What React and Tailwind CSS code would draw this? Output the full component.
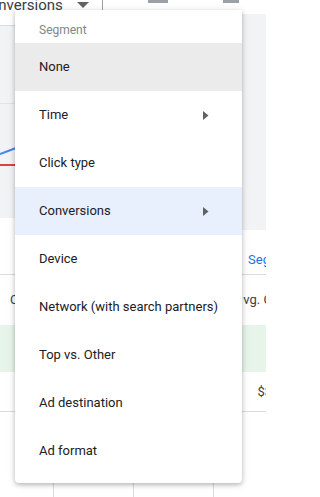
const items = [
  { label: "None", state: "hover" },
  { label: "Time", sub: true },
  { label: "Click type" },
  { label: "Conversions", sub: true, state: "active" },
  { label: "Device" },
  { label: "Network (with search partners)" },
  { label: "Top vs. Other" },
  { label: "Ad destination" },
  { label: "Ad format" }
];

function Caret() {
  return (
    <svg width="6" height="9" viewBox="0 0 6 9" className="mr-[33px]">
      <path d="M0 0 L5.5 4.5 L0 9 Z" fill="#5f6368" />
    </svg>
  );
}

function SegmentMenu() {
  return (
    <div className="absolute left-[15px] top-[10px] w-[227px] rounded-b-[4px] bg-white pb-[8px] shadow-[0_2px_4px_rgba(0,0,0,0.2),0_1px_8px_rgba(0,0,0,0.12)]">
      <div className="flex h-[33px] items-center pl-[24px] pt-[7px] text-[12px] text-[#80868b]">Segment</div>
      {items.map((item) => (
        <div
          key={item.label}
          className={[
            "flex h-[48px] items-center justify-between pl-[24px] text-[13px] text-[#202124]",
            item.state === "hover" ? "bg-[#ebebeb]" : "",
            item.state === "active" ? "bg-[#e8f0fe]" : ""
          ].join(" ")}
        >
          <span>{item.label}</span>
          {item.sub && <Caret />}
        </div>
      ))}
    </div>
  );
}

export default function App() {
  return (
    <div className="relative h-[497px] w-[266px] overflow-hidden bg-white font-['Roboto',sans-serif]">
      {/* page behind the menu */}
      <div className="flex h-[26px] items-start border-b border-[#dadce0] bg-white">
        <span className="-ml-[20px] -mt-[6px] text-[15px] text-[#3c4043]">Conversions</span>
        <svg width="12" height="7" viewBox="0 0 12 7" className="ml-[14px] mt-[2px]">
          <path d="M0 0 L12 0 L6 6 Z" fill="#5f6368" />
        </svg>
        <div className="ml-[13px] h-[14px] w-px bg-[#9aa0a6]" />
        <div className="ml-[45px] h-[3px] w-[20px] bg-[#9aa0a6]" />
        <div className="ml-[55px] h-[3px] w-[16px] bg-[#9aa0a6]" />
      </div>
      <div className="flex h-[192px] flex-col bg-[#f1f3f4]">
        <div className="h-[78px] border-b border-[#e4e4e4]" />
        <svg width="40" height="70" viewBox="0 0 40 70">
          <path d="M0 50 L16 44" stroke="#4285f4" strokeWidth="2" fill="none" />
          <path d="M0 61 L16 61" stroke="#db4437" strokeWidth="2" fill="none" />
        </svg>
      </div>
      <div className="flex h-[57px] items-end justify-end border-b border-[#dadce0] bg-white pb-[5px]">
        <span className="-mr-[4px] text-[13px] text-[#1a73e8]">Seg</span>
      </div>
      <div className="flex h-[50px] items-center justify-between bg-white">
        <span className="ml-[10px] text-[13px] text-[#3c4043]">C</span>
        <span className="-mr-[6px] text-[13px] text-[#3c4043]">vg. C</span>
      </div>
      <div className="h-[47px] bg-[#e6f4ea]" />
      <div className="flex h-[40px] items-center justify-end border-b border-[#dadce0] bg-white">
        <span className="-mr-[6px] text-[13px] text-[#3c4043]">$3</span>
      </div>
      <div className="flex h-[85px] pl-[53px]">
        <div className="w-[80px] border-l border-[#dadce0]" />
        <div className="w-[80px] border-l border-[#dadce0]" />
        <div className="w-[53px] border-l border-[#dadce0]" />
      </div>
      <div className="absolute right-0 top-[14px] h-[216px] w-[24px] bg-[#f1f3f4]" />
      <SegmentMenu />
    </div>
  );
}
